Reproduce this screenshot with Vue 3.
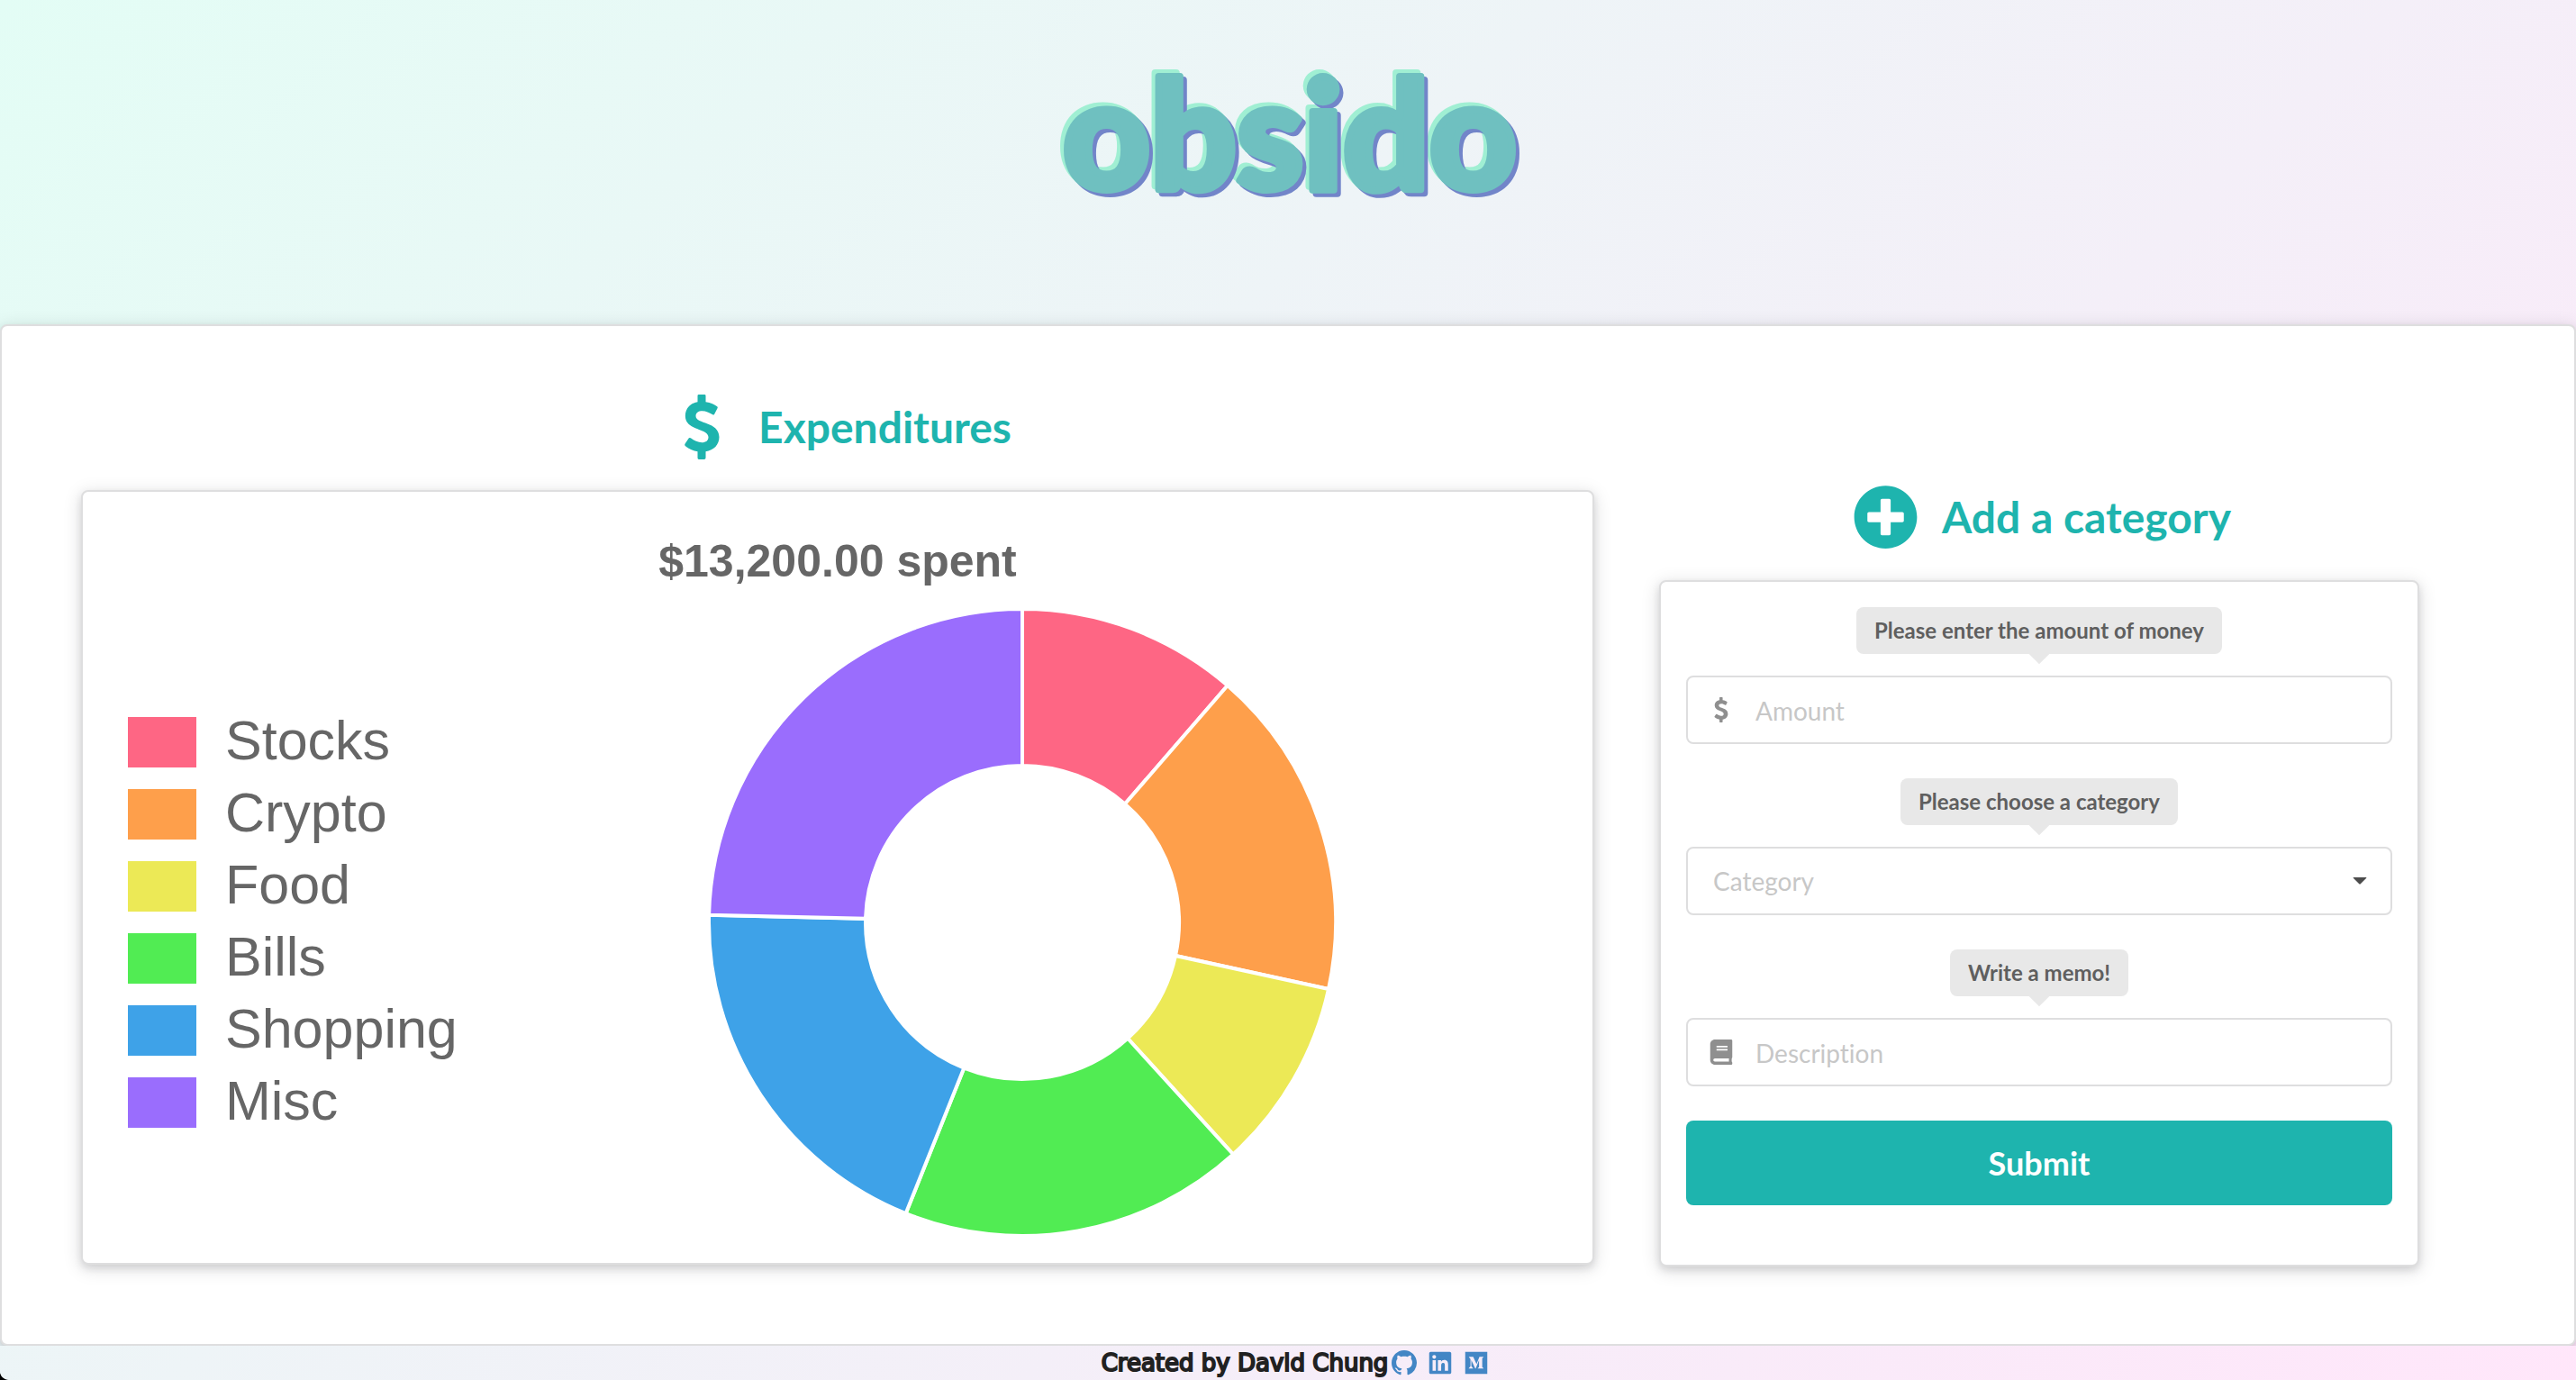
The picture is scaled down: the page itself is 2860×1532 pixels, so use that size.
<script setup>
import { ref } from 'vue'

const items = [
  { name: 'Stocks', amount: 1500, color: '#fe6684' },
  { name: 'Crypto', amount: 2250, color: '#fe9f4b' },
  { name: 'Food', amount: 1300, color: '#ece956' },
  { name: 'Bills', amount: 2350, color: '#51ec53' },
  { name: 'Shopping', amount: 2550, color: '#3ea2e8' },
  { name: 'Misc', amount: 3250, color: '#9a6dfd' },
]

const total = items.reduce((sum, item) => sum + item.amount, 0)
const totalText = '$' + total.toLocaleString('en-US', { minimumFractionDigits: 2 })

const OUTER = 348
const INNER = 174

function point(radius, angle) {
  return `${radius * Math.sin(angle)} ${-radius * Math.cos(angle)}`
}

function buildSlices() {
  let start = 0
  return items.map((item) => {
    const end = start + (item.amount / total) * Math.PI * 2
    const d =
      `M${point(OUTER, start)}A${OUTER} ${OUTER} 0 0 1 ${point(OUTER, end)}` +
      `L${point(INNER, end)}A${INNER} ${INNER} 0 0 0 ${point(INNER, start)}Z`
    start = end
    return { name: item.name, color: item.color, d }
  })
}

const slices = buildSlices()

const dollarPath =
  'M156 136V115q0-4 4-4h19q4 0 4 4V136C200 138 213 145 221 151Q224 153 222 157L212 176Q210 180 206 178C195 171 183 166 172 166C158 166 150 172 150 183C150 210 228 200 228 253C228 278 210 297 183 301V322q0 5-5 5h-18q-4 0-4-5V301C140 298 124 290 115 282Q112 279 114 275L126 257Q128 253 133 256C144 264 158 271 170 271C184 271 192 264 192 253C192 222 115 232 115 182C115 158 131 140 156 136Z'

const amount = ref('')
const category = ref('')
const memo = ref('')
</script>

<template>
  <div class="page">
    <header class="masthead">
      <h1 class="brand">
        <svg class="logo" viewBox="0 0 560 236" role="img" aria-label="obsido">
          <text x="282" y="172" text-anchor="middle">obsido</text>
        </svg>
      </h1>
    </header>

    <main class="board">
      <section class="column">
        <h2 class="heading">
          <svg class="heading-icon" viewBox="63 111 216 216" aria-hidden="true"><path :d="dollarPath" /></svg>
          Expenditures
        </h2>
        <div class="card chart">
          <h3 class="chart-title">{{ totalText }} spent</h3>
          <div class="chart-body">
            <ul class="legend">
              <li v-for="item in items" :key="item.name">
                <span class="swatch" :style="{ backgroundColor: item.color }"></span>
                {{ item.name }}
              </li>
            </ul>
            <div class="plot">
              <svg class="donut" viewBox="-350 -350 700 700" role="img" aria-label="Spending by category">
                <path v-for="slice in slices" :key="slice.name" :d="slice.d" :fill="slice.color" />
              </svg>
            </div>
          </div>
        </div>
      </section>

      <section class="column column-form">
        <h2 class="heading">
          <svg class="heading-icon" viewBox="0 0 512 512" aria-hidden="true">
            <path d="M256 8C119 8 8 119 8 256s111 248 248 248 248-111 248-248S393 8 256 8zm144 276c0 6.600-5.400 12-12 12h-92v92c0 6.600-5.400 12-12 12h-56c-6.600 0-12-5.400-12-12v-92h-92c-6.600 0-12-5.400-12-12v-56c0-6.600 5.400-12 12-12h92v-92c0-6.600 5.400-12 12-12h56c6.600 0 12 5.400 12 12v92h92c6.600 0 12 5.400 12 12v56z" />
          </svg>
          Add a category
        </h2>
        <form class="card form" @submit.prevent>
          <div class="field">
            <label for="amount">Please enter the amount of money</label>
            <div class="control">
              <input id="amount" v-model="amount" class="with-icon" type="text" placeholder="Amount" />
              <svg class="field-icon" viewBox="63 111 216 216" aria-hidden="true"><path :d="dollarPath" /></svg>
            </div>
          </div>
          <div class="field">
            <label for="category">Please choose a category</label>
            <div class="control">
              <select id="category" v-model="category" :class="{ empty: !category }">
                <option value="" disabled>Category</option>
                <option v-for="item in items" :key="item.name">{{ item.name }}</option>
              </select>
              <svg class="caret" viewBox="0 0 16 8" aria-hidden="true"><path d="M1 0h14q1 0 0 1L9 7q-1 1-2 0L1 1q-1-1 0-1z" /></svg>
            </div>
          </div>
          <div class="field">
            <label for="memo">Write a memo!</label>
            <div class="control">
              <input id="memo" v-model="memo" class="with-icon" type="text" placeholder="Description" />
              <svg class="field-icon" viewBox="-32 0 512 512" aria-hidden="true">
                <path d="M448 360V24c0-13.300-10.700-24-24-24H96C43 0 0 43 0 96v320c0 53 43 96 96 96h328c13.300 0 24-10.700 24-24v-16c0-7.500-3.500-14.300-8.900-18.700-4.200-15.400-4.200-59.300 0-74.700 5.400-4.300 8.900-11.100 8.900-18.600zM128 134c0-3.300 2.700-6 6-6h212c3.300 0 6 2.700 6 6v20c0 3.300-2.700 6-6 6H134c-3.300 0-6-2.700-6-6v-20zm0 64c0-3.300 2.700-6 6-6h212c3.300 0 6 2.700 6 6v20c0 3.300-2.700 6-6 6H134c-3.300 0-6-2.700-6-6v-20zm253.400 250H96c-17.700 0-32-14.300-32-32 0-17.600 14.400-32 32-32h285.400c-1.900 17.100-1.900 46.900 0 64z" />
              </svg>
            </div>
          </div>
          <button type="submit">Submit</button>
        </form>
      </section>
    </main>

    <footer class="credits">
      <span>Created by David Chung</span>
      <a href="#github" aria-label="GitHub">
        <svg viewBox="0 0 16 16" aria-hidden="true"><path d="M8 0C3.580 0 0 3.580 0 8c0 3.540 2.290 6.530 5.470 7.590.4.07.55-.17.55-.38 0-.19-.01-.82-.01-1.490-2.010.37-2.530-.49-2.690-.94-.09-.23-.48-.94-.82-1.130-.28-.15-.68-.52-.01-.53.63-.01 1.080.58 1.230.82.72 1.210 1.870.87 2.330.66.07-.52.28-.87.51-1.070-1.780-.2-3.640-.89-3.640-3.950 0-.87.31-1.590.82-2.150-.08-.2-.36-1.020.08-2.120 0 0 .67-.21 2.200.82.64-.18 1.320-.27 2-.27s1.360.09 2 .27c1.530-1.040 2.200-.82 2.200-.82.44 1.100.16 1.920.08 2.120.51.56.82 1.270.82 2.150 0 3.070-1.870 3.750-3.650 3.950.29.25.54.73.54 1.480 0 1.070-.01 1.930-.01 2.200 0 .21.15.46.55.38A8.010 8.010 0 0 0 16 8c0-4.420-3.580-8-8-8z" /></svg>
      </a>
      <a href="#linkedin" aria-label="LinkedIn">
        <svg viewBox="-32 0 512 512" aria-hidden="true"><path d="M416 32H31.900C14.300 32 0 46.500 0 64.300v383.400C0 465.500 14.300 480 31.900 480H416c17.600 0 32-14.500 32-32.300V64.300c0-17.800-14.400-32.300-32-32.300zM135.400 416H69V202.200h66.500V416zm-33.200-243c-21.300 0-38.500-17.300-38.500-38.500S80.900 96 102.200 96c21.200 0 38.500 17.300 38.500 38.500 0 21.300-17.200 38.500-38.500 38.500zm282.100 243h-66.400V312c0-24.800-.5-56.700-34.500-56.700-34.600 0-39.900 27-39.900 54.900V416h-66.400V202.200h63.700v29.200h.9c8.900-16.800 30.600-34.500 62.900-34.500 67.200 0 79.700 44.300 79.700 101.900V416z" /></svg>
      </a>
      <a href="#medium" aria-label="Medium">
        <svg viewBox="-32 0 512 512" aria-hidden="true"><path d="M0 32v448h448V32H0zm372.200 106.100l-24 23c-2.100 1.600-3.100 4.200-2.700 6.700v169.300c-.4 2.600.6 5.200 2.700 6.700l23.500 23v5.100h-118V367l24.300-23.600c2.400-2.400 2.400-3.100 2.400-6.700V199.800l-67.600 171.600h-9.100L125 199.800v115c-.7 4.800 1 9.700 4.400 13.200l31.600 38.300v5.100H71.200v-5.100l31.600-38.300c3.400-3.500 4.900-8.400 4.100-13.200v-133c.4-3.700-1-7.300-3.800-9.800L75 138.100V133h87.300l67.400 148L289 133.100h83.200v5z" /></svg>
      </a>
    </footer>
  </div>
</template>

<style>
html {
  background: #000;
}
</style>

<style scoped>
.page,
.page * {
  box-sizing: border-box;
}

.page {
  display: flex;
  flex-direction: column;
  min-height: 100vh;
  overflow: hidden;
  border-bottom-left-radius: 10px;
  background: linear-gradient(135deg, #e3fdf5, #ffe6fa) fixed;
  font-family: Lato, "Liberation Sans", sans-serif;
  font-variant-ligatures: none;
}

.masthead {
  padding: 38px 0 86px;
}

.brand {
  margin: 0;
  font-size: 168px;
  font-weight: 900;
  line-height: 1;
}

.logo {
  display: block;
  width: 560px;
  height: 236px;
  margin: 0 auto;
  fill: #6fc0c0;
  stroke: #6fc0c0;
  stroke-width: 8px;
  stroke-linejoin: round;
  filter: drop-shadow(4px 4px 0 #7285c9) drop-shadow(-4px -4px 0 #a0efd3);
}

.board {
  display: grid;
  grid-template-columns: 1680fr 844fr;
  align-items: start;
  gap: 72px;
  flex: 1;
  padding: 74px 172px 86px 88px;
  border: 2px solid #dededf;
  border-radius: 8px;
  background: #fff;
  box-shadow: 0 4px 8px rgba(34, 36, 38, 0.12), 0 4px 20px rgba(34, 36, 38, 0.15);
}

.column-form {
  padding-top: 100px;
}

.heading {
  display: flex;
  align-items: center;
  justify-content: center;
  gap: 20px;
  margin: 0 0 32px;
  color: #1eb4ae;
  font-size: 48px;
  font-weight: 700;
  line-height: 76px;
}

.heading-icon {
  width: 85px;
  height: 72px;
  fill: currentColor;
}

.card {
  padding: 28px;
  border: 2px solid #dededf;
  border-radius: 8px;
  background: #fff;
  box-shadow: 0 4px 8px rgba(34, 36, 38, 0.12), 0 4px 20px rgba(34, 36, 38, 0.15);
}

.chart {
  color: #666;
  font-family: "Liberation Sans", Arial, sans-serif;
}

.chart-title {
  margin: 0;
  font-size: 50px;
  font-weight: 700;
  line-height: 98px;
  text-align: center;
}

.chart-body {
  display: flex;
  align-items: center;
  padding-top: 2px;
}

.legend {
  display: flex;
  flex: 0 0 410px;
  flex-direction: column;
  gap: 24px;
  margin: 0;
  padding: 0 0 0 22px;
  list-style: none;
  font-size: 61px;
  line-height: 52px;
}

.legend li {
  display: flex;
  gap: 32px;
}

.swatch {
  width: 76px;
  height: 56px;
}

.plot {
  flex: 1;
}

.donut {
  display: block;
  width: 700px;
  max-width: 100%;
  margin: 0 auto;
  stroke: #fff;
  stroke-width: 4px;
}

.form {
  display: flex;
  flex-direction: column;
  gap: 38px;
  padding-bottom: 66px;
}

.field {
  display: flex;
  flex-direction: column;
  align-items: center;
  gap: 24px;
}

.field label {
  position: relative;
  padding: 0 20px;
  border-radius: 8px;
  background: #e8e8e8;
  color: #5f5f5f;
  font-size: 24px;
  font-weight: 700;
  line-height: 52px;
}

.field label::after {
  position: absolute;
  bottom: -8px;
  left: calc(50% - 8px);
  width: 16px;
  height: 16px;
  background: #e8e8e8;
  content: "";
  transform: rotate(45deg);
}

.control {
  position: relative;
  width: 100%;
}

.control input,
.control select {
  display: block;
  width: 100%;
  height: 76px;
  padding: 0 28px;
  border: 2px solid #dededf;
  border-radius: 8px;
  outline: 0;
  appearance: none;
  background: #fff;
  color: #212121;
  font-family: inherit;
  font-size: 28px;
  font-variant-ligatures: none;
}

.control .with-icon {
  padding: 2px 28px 0 75px;
}

.control input::placeholder,
.control .empty {
  color: #c7c7c7;
  opacity: 1;
}

.field-icon {
  position: absolute;
  top: 24px;
  left: 25px;
  width: 28px;
  height: 28px;
  fill: #8f8f8f;
  pointer-events: none;
}

.caret {
  position: absolute;
  top: 34px;
  right: 28px;
  width: 16px;
  height: 8px;
  fill: #4c4c4c;
  pointer-events: none;
}

button {
  height: 94px;
  border: 0;
  border-radius: 8px;
  background: #1eb4ae;
  color: #fff;
  font-family: inherit;
  font-size: 36px;
  font-weight: 700;
}

.credits {
  display: flex;
  position: relative;
  align-items: center;
  justify-content: center;
  gap: 12px;
  height: 38px;
  padding-left: 16px;
  background: linear-gradient(135deg, #e3fdf5, #ffe6fa) fixed;
  color: #212121;
  font-family: "DejaVu Sans", Verdana, sans-serif;
  font-size: 26px;
  line-height: 38px;
}

.credits span {
  margin-right: -8px;
  -webkit-text-stroke: 2px #212121;
}

.credits svg {
  display: block;
  width: 28px;
  height: 28px;
  fill: #4386c5;
}
</style>
